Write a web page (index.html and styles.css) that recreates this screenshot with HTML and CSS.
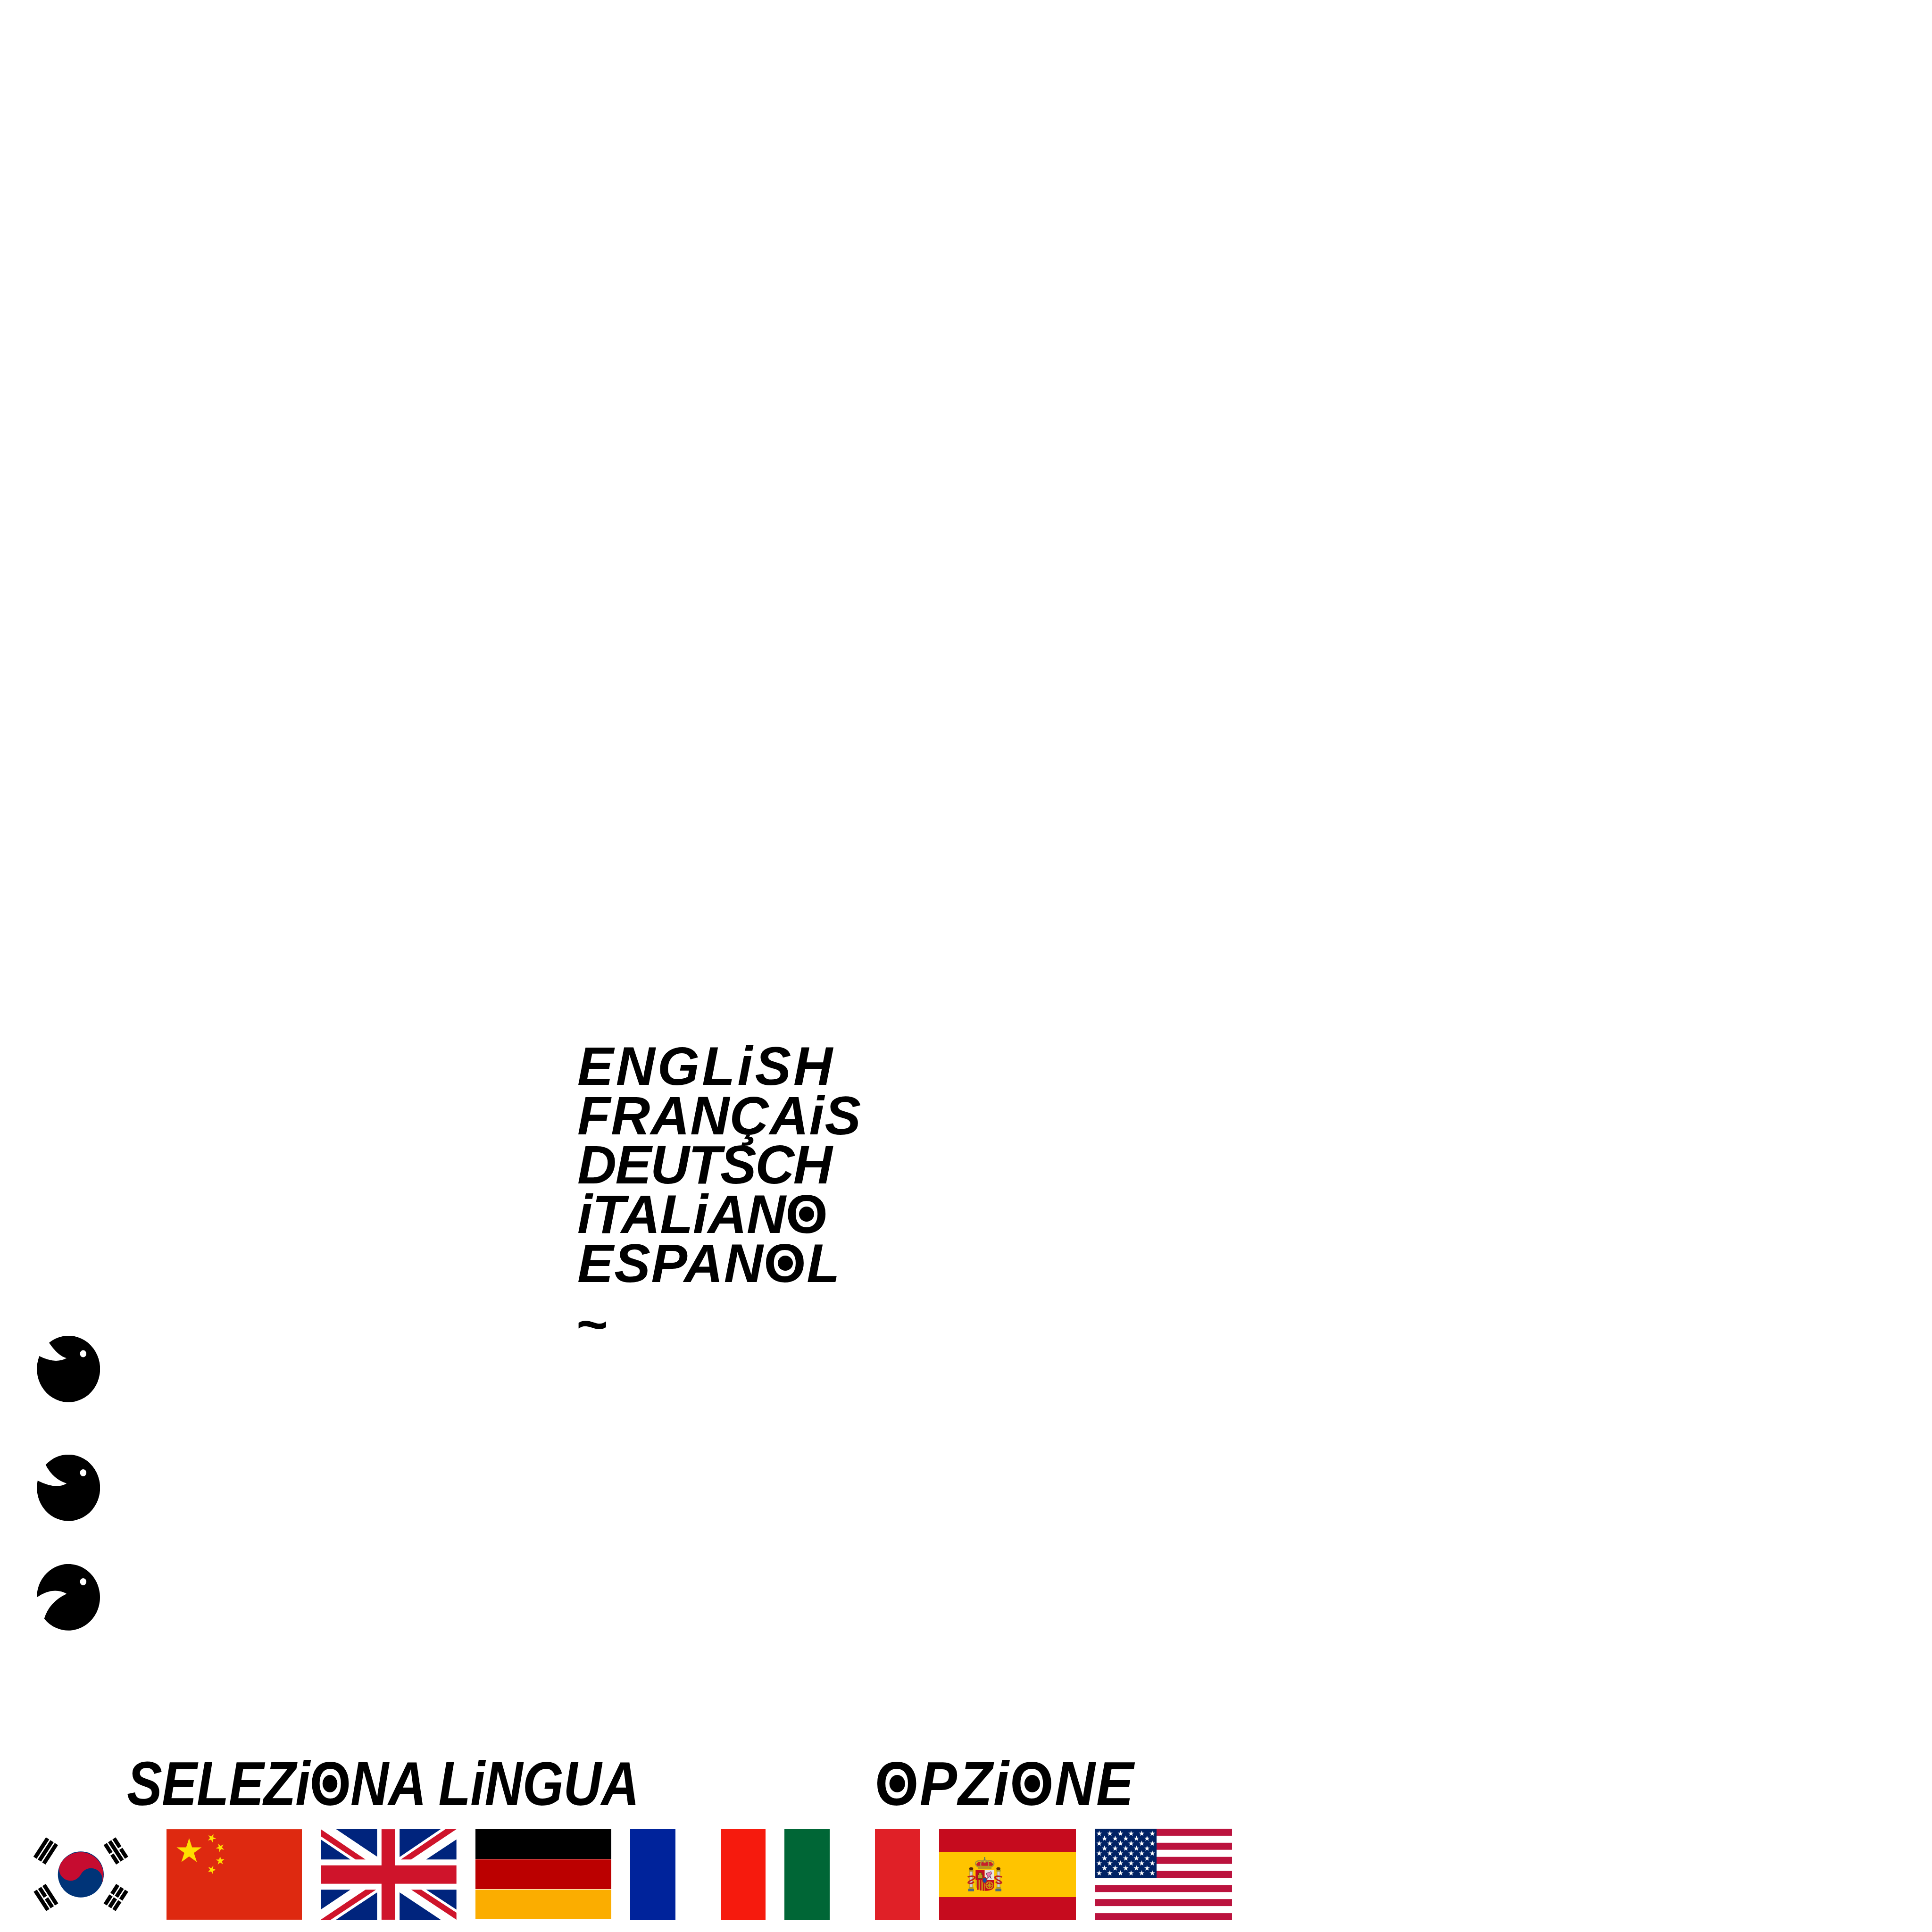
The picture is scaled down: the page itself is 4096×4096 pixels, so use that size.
FILE: index.html
```html
<!DOCTYPE html>
<html lang="it">
<head>
  <meta charset="UTF-8" />
  <title>Seleziona lingua</title>
  <link rel="stylesheet" href="styles.css">
</head>
<body>
  <main class="page">
    <ul class="lang-list">
      <li class="lang-en">ENGLiSH</li>
      <li class="lang-fr">FRANÇAiS</li>
      <li class="lang-de">DEUTSCH</li>
      <li class="lang-it">iTALiAN<span class="ring">O</span></li>
      <li class="lang-es">ESPAN<span class="ring">O</span>L</li>
      <li class="lang-tilde">~</li>
    </ul>

    <div class="birds">
      <svg class="bird" viewBox="0 0 134 141">
        <path d="M26 14.7A67 70.5 0 1 1 5.4 43.1Q39.2 60.3 63.3 47.3Q45.3 43 26 14.7Z" />
        <ellipse class="eye" cx="98.3" cy="38" rx="6.8" ry="7.4" />
      </svg>
      <svg class="bird bird-mid" viewBox="0 0 134 141">
        <path d="M18.7 21.6A67 70.5 0 1 1 1.8 55Q41.2 74.8 63.3 61Q34.8 52.5 18.7 21.6Z" />
        <ellipse class="eye" cx="98.3" cy="38.4" rx="6.8" ry="7.4" />
      </svg>
      <svg class="bird bird-open" viewBox="0 0 134 141">
        <path d="M0 70.5A67 70.5 0 1 1 15.7 115.7Q26.5 80.2 63.3 63Q34.3 47.2 0 70.5Z" />
        <ellipse class="eye" cx="98.3" cy="37.5" rx="6.8" ry="7.4" />
      </svg>
    </div>

    <div class="titles">
      <h2 class="title title-lang">SELEZi<span class="ring">O</span>NA LiNGUA</h2>
      <h2 class="title title-opt"><span class="ring">O</span>PZi<span class="ring">O</span>NE</h2>
    </div>

    <div class="flags">
      <!-- korea -->
      <svg class="flag" viewBox="0 0 288 192">
        <circle cx="146.5" cy="96" r="48.7" fill="#003478" />
        <path fill="#c60c30" d="M102.4 75.4A48.7 48.7 0 0 1 190.6 116.6A24.35 24.35 0 0 0 146.5 96A24.35 24.35 0 0 1 102.4 75.4Z" />
        <g transform="translate(72 46) rotate(33)">
          <rect x="-15.3" y="-24.5" width="8.3" height="49" />
          <rect x="-4.15" y="-24.5" width="8.3" height="49" />
          <rect x="7" y="-24.5" width="8.3" height="49" />
        </g>
        <g transform="translate(221 46) rotate(-33)">
          <rect x="-15.3" y="-24.5" width="8.3" height="22.5" />
          <rect x="-15.3" y="2" width="8.3" height="22.5" />
          <rect x="-4.15" y="-24.5" width="8.3" height="49" />
          <rect x="7" y="-24.5" width="8.3" height="22.5" />
          <rect x="7" y="2" width="8.3" height="22.5" />
        </g>
        <g transform="translate(72.5 145) rotate(-33)">
          <rect x="-15.3" y="-24.5" width="8.3" height="49" />
          <rect x="-4.15" y="-24.5" width="8.3" height="22.5" />
          <rect x="-4.15" y="2" width="8.3" height="22.5" />
          <rect x="7" y="-24.5" width="8.3" height="49" />
        </g>
        <g transform="translate(221 145) rotate(33)">
          <rect x="-15.3" y="-24.5" width="8.3" height="22.5" />
          <rect x="-15.3" y="2" width="8.3" height="22.5" />
          <rect x="-4.15" y="-24.5" width="8.3" height="22.5" />
          <rect x="-4.15" y="2" width="8.3" height="22.5" />
          <rect x="7" y="-24.5" width="8.3" height="22.5" />
          <rect x="7" y="2" width="8.3" height="22.5" />
        </g>
      </svg>

      <!-- china -->
      <svg class="flag" viewBox="0 0 288 192">
        <defs>
          <polygon id="star" points="0,-1 .2245,-.309 .951,-.309 .363,.118 .588,.809 0,.382 -.588,.809 -.363,.118 -.951,-.309 -.2245,-.309" />
        </defs>
        <rect width="288" height="192" fill="#de2910" />
        <g fill="#ffde00">
          <use href="#star" transform="translate(48 47) scale(28)" />
          <use href="#star" transform="translate(96 19) rotate(23) scale(9.5)" />
          <use href="#star" transform="translate(114 39) rotate(46) scale(9.5)" />
          <use href="#star" transform="translate(114 67) rotate(70) scale(9.5)" />
          <use href="#star" transform="translate(96 86) rotate(21) scale(9.5)" />
        </g>
      </svg>

      <!-- uk -->
      <svg class="flag" viewBox="0 0 288 192">
        <rect width="288" height="192" fill="#fff" />
        <g fill="#00247d">
          <polygon points="32.6,0 119.6,0 119.6,58.3" />
          <polygon points="0,21.7 63,64.3 0,64.3" />
          <polygon points="167.4,0 254.5,0 167.4,59" />
          <polygon points="288,21.7 288,64.3 223.7,64.3" />
          <polygon points="0,128.3 63,128.3 0,170.7" />
          <polygon points="119.6,134 119.6,192 32.6,192" />
          <polygon points="223.7,128.3 288,128.3 288,170.7" />
          <polygon points="167.4,134 254.5,192 167.4,192" />
        </g>
        <g fill="#cf142b">
          <rect x="129" y="0" width="29" height="192" />
          <rect x="0" y="76.7" width="288" height="39" />
          <polygon points="0,0 95,64.3 74,64.3 0,15" />
          <polygon points="264.7,0 288,0 192,64.3 170,64.3" />
          <polygon points="95,128.3 117.4,128.3 21.4,192 0,192" />
          <polygon points="192,128.3 213.4,128.3 288,177 288,192" />
        </g>
      </svg>

      <div class="flag stripes-h flag-de"><i></i><i></i><i></i></div>
      <div class="flag stripes-v flag-fr"><i></i><i></i><i></i></div>
      <div class="flag stripes-v flag-it"><i></i><i></i><i></i></div>

      <!-- spain -->
      <svg class="flag flag-es" viewBox="0 0 290 192">
        <rect width="290" height="192" fill="#c60b1e" />
        <rect y="48" width="290" height="96" fill="#ffc400" />
        <g transform="translate(29 43) scale(.3333)">
          <!-- pillars -->
          <g fill="#d0d0d0" stroke="#8a8a60" stroke-width="3">
            <rect x="108" y="138" width="18" height="105" />
            <rect x="282" y="138" width="18" height="105" />
          </g>
          <g fill="#b09a1c">
            <rect x="103" y="128" width="28" height="12" />
            <rect x="277" y="128" width="28" height="12" />
            <rect x="103" y="238" width="28" height="12" />
            <rect x="277" y="238" width="28" height="12" />
          </g>
          <g fill="#506a80">
            <rect x="97" y="250" width="38" height="16" />
            <rect x="271" y="250" width="38" height="16" />
          </g>
          <g fill="#5a2a08">
            <ellipse cx="117" cy="122" rx="13" ry="9" />
            <ellipse cx="290" cy="122" rx="13" ry="9" />
          </g>
          <g fill="none" stroke="#c02020" stroke-width="9">
            <path d="M95 175C120 165 140 172 140 178C140 195 100 195 98 212C115 222 130 210 135 205" />
            <path d="M313 175C288 165 268 172 268 178C268 195 308 195 310 212C293 222 278 210 273 205" />
          </g>
          <!-- crown -->
          <path fill="#c8202a" d="M150 98C150 78 180 72 203 84C226 72 256 78 256 98L245 110H160Z" />
          <g fill="none" stroke="#a8923a" stroke-width="7">
            <path d="M160 110C135 95 140 72 172 72C190 72 203 84 203 84C203 84 216 72 234 72C266 72 271 95 246 110" />
            <path d="M180 108C170 80 190 68 203 66C216 68 236 80 226 108" />
          </g>
          <rect x="199" y="48" width="8" height="22" fill="#5a7a60" />
          <rect x="160" y="104" width="86" height="22" fill="#b8961e" />
          <!-- shield -->
          <path fill="#c60b1e" d="M145 130H203V195H145Z" />
          <rect x="203" y="130" width="59" height="65" fill="#e8e4e4" />
          <path fill="#c60b1e" d="M203 195H262V235C262 255 235 265 203 263Z" />
          <path fill="#c8a010" d="M145 195H203V263C170 263 145 250 145 225Z" />
          <g fill="#c60b1e">
            <rect x="155" y="195" width="9" height="62" />
            <rect x="173" y="195" width="9" height="66" />
            <rect x="191" y="195" width="9" height="68" />
          </g>
          <!-- castle, lion, wheel -->
          <path fill="#b89a20" stroke="#5a4a10" stroke-width="3" d="M160 185V160H165V148H183V160H189V185Z" />
          <path fill="#e878a8" stroke="#6a3060" stroke-width="3" d="M215 150L232 146L243 140L248 155L236 162L244 185L232 172L222 186L222 166L212 160Z" />
          <circle cx="233" cy="228" r="22" fill="none" stroke="#c8a010" stroke-width="6" />
          <path stroke="#c8a010" stroke-width="4" d="M233 206V250M211 228H255M218 213L248 243M248 213L218 243" />
          <ellipse cx="203" cy="196" rx="17" ry="21" fill="#c02020" />
          <ellipse cx="203" cy="196" rx="12" ry="16" fill="#1a4a9a" />
        </g>
      </svg>

      <!-- usa -->
      <svg class="flag flag-us" viewBox="0 0 291 194">
        <defs>
          <g id="row-six" fill="#fff">
            <use href="#star" transform="translate(9.4 0) scale(6.2)" />
            <use href="#star" transform="translate(32 0) scale(6.2)" />
            <use href="#star" transform="translate(54.5 0) scale(6.2)" />
            <use href="#star" transform="translate(77 0) scale(6.2)" />
            <use href="#star" transform="translate(99.5 0) scale(6.2)" />
            <use href="#star" transform="translate(122 0) scale(6.2)" />
          </g>
          <g id="row-five" fill="#fff">
            <use href="#star" transform="translate(20.7 0) scale(6.2)" />
            <use href="#star" transform="translate(43.3 0) scale(6.2)" />
            <use href="#star" transform="translate(65.8 0) scale(6.2)" />
            <use href="#star" transform="translate(88.3 0) scale(6.2)" />
            <use href="#star" transform="translate(110.8 0) scale(6.2)" />
          </g>
        </defs>
        <g fill="#bb133e">
          <rect y="0" width="291" height="14.9" />
          <rect y="29.8" width="291" height="14.9" />
          <rect y="59.7" width="291" height="14.9" />
          <rect y="89.5" width="291" height="14.9" />
          <rect y="119.4" width="291" height="14.9" />
          <rect y="149.2" width="291" height="14.9" />
          <rect y="179.1" width="291" height="14.9" />
        </g>
        <rect width="131" height="104.4" fill="#002264" />
        <use href="#row-six" y="10.3" />
        <use href="#row-five" y="20.8" />
        <use href="#row-six" y="31.3" />
        <use href="#row-five" y="41.8" />
        <use href="#row-six" y="52.3" />
        <use href="#row-five" y="62.8" />
        <use href="#row-six" y="73.3" />
        <use href="#row-five" y="83.8" />
        <use href="#row-six" y="94.3" />
      </svg>
    </div>
  </main>
</body>
</html>
```

FILE: styles.css
```css
body {
  margin: 0;
  background: #fff;
  color: #000;
  font-family: "Liberation Sans", Arial, sans-serif;
}

.page {
  display: flex;
  flex-direction: column;
  padding-top: 2208px;
}

.lang-list {
  list-style: none;
  margin: 0 0 0 1224px;
  padding: 0;
  font-size: 115px;
  font-weight: bold;
  font-style: italic;
  line-height: 104.5px;
}

.lang-en { letter-spacing: 5px; }
.lang-fr { letter-spacing: 1px; }
.lang-de { letter-spacing: -2.5px; }
.lang-it { letter-spacing: -0.5px; }
.lang-es { letter-spacing: 1.5px; }

.lang-tilde {
  height: 47px;
  line-height: 62px;
  margin: 45px 0 0 -4px;
}

.ring {
  position: relative;
  display: inline-block;
  font-style: normal;
}

.ring::after {
  content: "";
  position: absolute;
  left: calc(50% - 0.14em);
  top: 50%;
  width: 0.28em;
  height: 0.28em;
  margin-top: -0.14em;
  border-radius: 50%;
  background: #000;
}

.birds {
  display: flex;
  flex-direction: column;
  align-items: flex-start;
  margin: 9px 0 0 78px;
}

.bird {
  width: 134px;
  height: 141px;
}

.bird-mid { margin-top: 111px; }
.bird-open { margin-top: 91px; }

.eye { fill: #fff; }

.titles {
  display: flex;
  margin-top: 269px;
}

.title {
  margin: 0;
  font-size: 132px;
  line-height: 112px;
  font-weight: bold;
  font-style: italic;
  white-space: nowrap;
  transform-origin: left center;
}

.title-lang {
  width: 1586px;
  margin-left: 269px;
  letter-spacing: -1px;
  transform: scaleX(0.85);
}

.title-opt {
  letter-spacing: 2.5px;
  transform: scaleX(0.9);
}

.flags {
  display: flex;
  align-items: center;
  gap: 40px;
  margin: 39px 0 0 25px;
}

.flag {
  flex: none;
  width: 287.7px;
  height: 192px;
}

.flag-es { width: 290px; }
.flag-us { width: 291px; height: 194px; }

.stripes-h,
.stripes-v {
  display: flex;
}

.stripes-h { flex-direction: column; gap: 1px; }
.stripes-h i,
.stripes-v i { flex: 1; }

.flag-de i:nth-child(1) { background: #000; }
.flag-de i:nth-child(2) { background: #bb0000; }
.flag-de i:nth-child(3) { background: #fbad00; }

.flag-fr i:nth-child(1) { background: #00239b; }
.flag-fr i:nth-child(3) { background: #f61a0d; }

.flag-it i:nth-child(1) { background: #006636; }
.flag-it i:nth-child(3) { background: #e02027; }
```
